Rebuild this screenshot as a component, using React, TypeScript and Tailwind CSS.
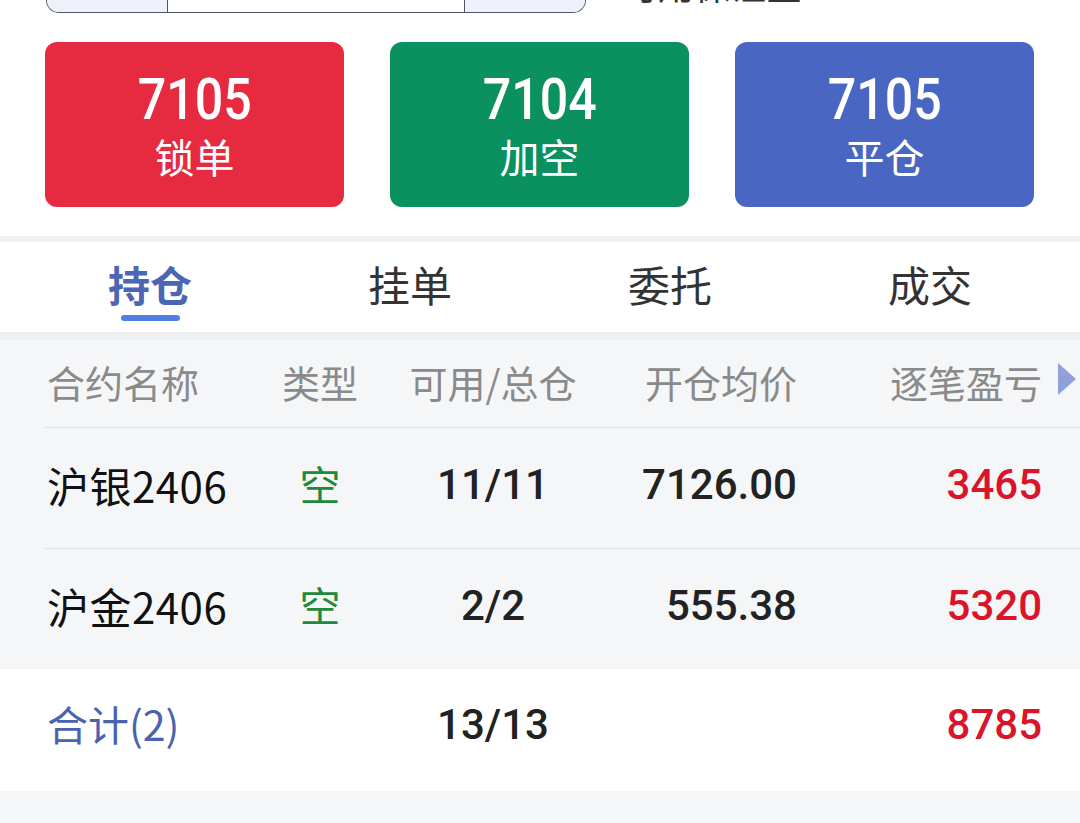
import React from "react";

const cjk = { fontFamily: '"Noto Sans CJK SC", "Noto Sans", sans-serif' };
const num = { fontFamily: 'Roboto, "Noto Sans", sans-serif' };

function ActionButton({ value, label, color }: { value: string; label: string; color: string }) {
  return (
    <div className={`flex h-[165px] w-[299px] flex-col items-center justify-center rounded-[12px] text-white ${color}`}>
      <div className="scale-x-[0.88] text-[57px] font-medium leading-[60px]" style={num}>{value}</div>
      <div className="mt-[2px] text-[40px] leading-[48px]" style={cjk}>{label}</div>
    </div>
  );
}

const rows = [
  { name: "沪银2406", type: "空", qty: "11/11", price: "7126.00", pnl: "3465" },
  { name: "沪金2406", type: "空", qty: "2/2", price: "555.38", pnl: "5320" },
];

const gridCols = "grid grid-cols-[223px_100px_246px_181px_245px] items-center";

export default function App() {
  return (
    <div className="w-[1080px] h-[823px] overflow-hidden bg-[#f5f6f8]" style={cjk}>
      {/* top white section */}
      <div className="bg-white">
        <div className="flex h-[42px] items-start">
          <div className="ml-[46px] flex h-[13px] w-[540px] overflow-hidden rounded-b-[16px] border-x border-b border-[#4f5668]">
            <div className="w-[120px] bg-[#eef1f9]" />
            <div className="w-[298px] border-x border-[#4f5668] bg-white" />
            <div className="flex-1 bg-[#eef1f9]" />
          </div>
          <div className="ml-[36px] h-[6px] overflow-hidden">
            <div className="-mt-[36px] text-[36px] leading-[40px] text-[#333]">可用保证金 ¥</div>
          </div>
        </div>
        <div className="flex justify-between pl-[45px] pr-[46px]">
          <ActionButton value="7105" label="锁单" color="bg-[#e62a40]" />
          <ActionButton value="7104" label="加空" color="bg-[#0a915f]" />
          <ActionButton value="7105" label="平仓" color="bg-[#4967c2]" />
        </div>
        <div className="h-[29px]" />
      </div>
      <div className="h-[6px] bg-[#f0f1f3]" />

      {/* tabs */}
      <div className="flex h-[90px] bg-white px-[20px]">
        {["持仓", "挂单", "委托", "成交"].map((t, i) => (
          <div key={t} className="flex w-[260px] flex-col items-center pt-[17px]">
            <div className={`text-[42px] leading-[50px] ${i === 0 ? "font-bold text-[#4a66b5]" : "text-[#333333]"}`}>{t}</div>
            {i === 0 ? <div className="mt-[6px] h-[6px] w-[59px] rounded-full bg-[#4f80e2]" /> : null}
          </div>
        ))}
      </div>
      <div className="h-[8px] bg-[#eeeff1]" />

      {/* header */}
      <div className="bg-[#f5f6f8]">
        <div className={`${gridCols} h-[87px] pb-[4px] pl-[47px] text-[38px] text-[#8a8a8a]`}>
          <div>合约名称</div>
          <div className="text-center">类型</div>
          <div className="text-center">可用/总仓</div>
          <div className="text-right">开仓均价</div>
          <div className="relative text-right">
            逐笔盈亏
            <svg className="absolute -right-[34px] top-[10px]" width="18" height="32" viewBox="0 0 18 32">
              <polygon points="0,0 18,16 0,32" fill="#90a1d9" />
            </svg>
          </div>
        </div>
        <div className="ml-[45px] h-px bg-[#dedfe2]" />
        {rows.map((r, i) => (
          <div key={r.name}>
            <div className={`${gridCols} h-[120px] pb-[8px] pl-[47px]`}>
              <div className="text-[42px] tracking-[0.5px] text-[#111]">{r.name}</div>
              <div className="text-center text-[41px] text-[#1f8a3b]">{r.type}</div>
              <div className="text-center text-[42px] font-medium text-[#222]" style={num}>{r.qty}</div>
              <div className="text-right text-[42px] font-medium text-[#222]" style={num}>{r.price}</div>
              <div className="text-right text-[42px] font-medium text-[#d9142b]" style={num}>{r.pnl}</div>
            </div>
            {i === 0 ? <div className="ml-[45px] h-px bg-[#dedfe2]" /> : null}
          </div>
        ))}
      </div>

      {/* total */}
      <div className={`${gridCols} h-[122px] bg-white pb-[12px] pl-[47px]`}>
        <div className="text-[41px] text-[#4a63b0]">合计(2)</div>
        <div />
        <div className="text-center text-[42px] font-medium text-[#222]" style={num}>13/13</div>
        <div />
        <div className="text-right text-[42px] font-medium text-[#d9142b]" style={num}>8785</div>
      </div>
    </div>
  );
}
